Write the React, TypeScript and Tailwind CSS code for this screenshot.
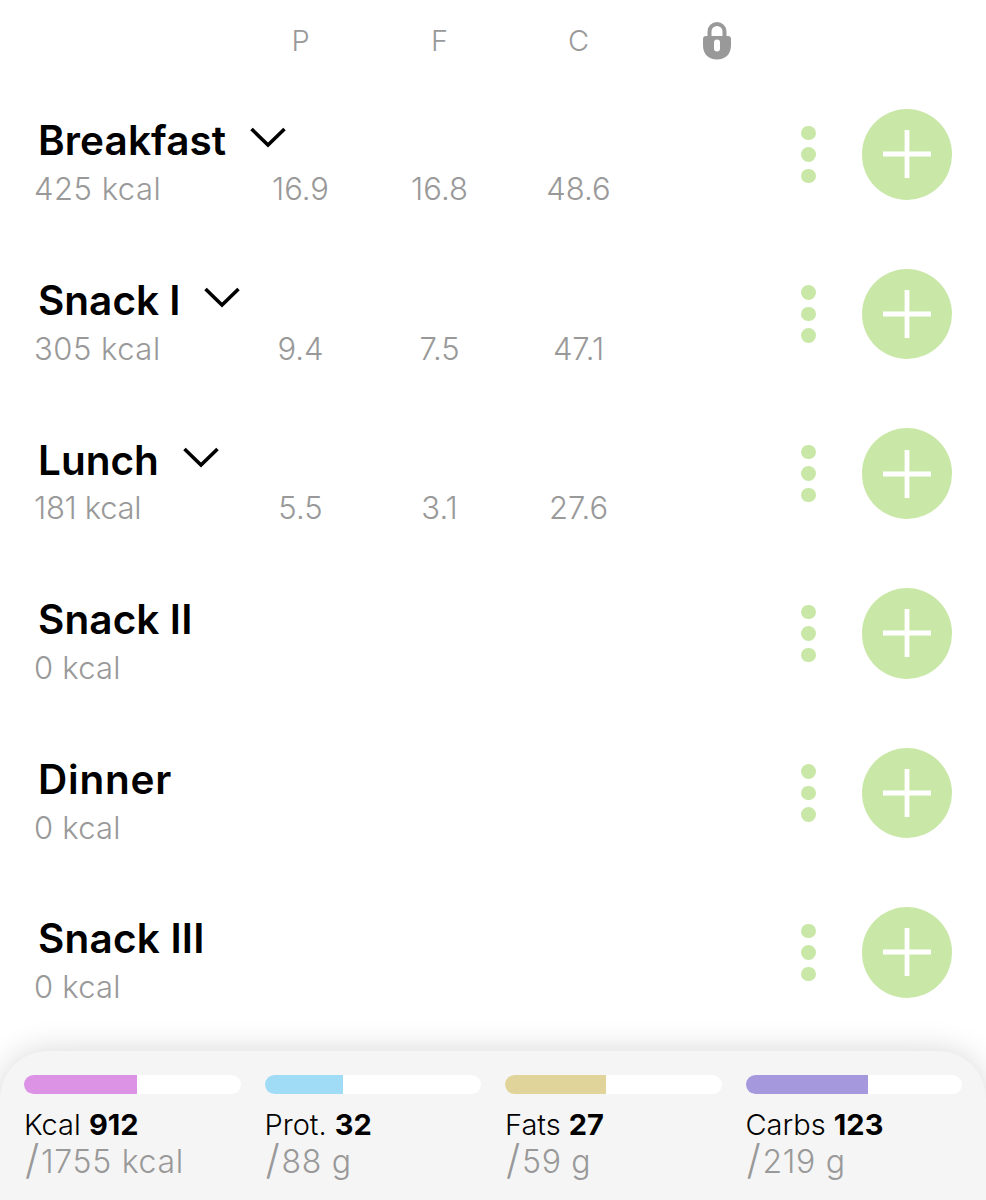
import clsx from "clsx";

type Meal = {
  name: string;
  kcal: number;
  macros?: string[];
  tracking: string;
  kcalTracking: string;
};

const meals: Meal[] = [
  { name: "Breakfast", kcal: 425, macros: ["16.9", "16.8", "48.6"], tracking: "tracking-[0.1px]", kcalTracking: "tracking-[0.5px]" },
  { name: "Snack I", kcal: 305, macros: ["9.4", "7.5", "47.1"], tracking: "tracking-[0px]", kcalTracking: "tracking-[0.5px]" },
  { name: "Lunch", kcal: 181, macros: ["5.5", "3.1", "27.6"], tracking: "tracking-[0px]", kcalTracking: "tracking-[-0.3px]" },
  { name: "Snack II", kcal: 0, tracking: "tracking-[0.1px]", kcalTracking: "tracking-[0.2px]" },
  { name: "Dinner", kcal: 0, tracking: "tracking-[0.8px]", kcalTracking: "tracking-[0.2px]" },
  { name: "Snack III", kcal: 0, tracking: "tracking-[0.2px]", kcalTracking: "tracking-[0.2px]" },
];

const totals = [
  { label: "Kcal", value: 912, goal: "1755 kcal", percent: 52, color: "bg-[#dc93e6]" },
  { label: "Prot.", value: 32, goal: "88 g", percent: 36.3, color: "bg-[#a0dcf6]" },
  { label: "Fats", value: 27, goal: "59 g", percent: 46.6, color: "bg-[#e1d49a]" },
  { label: "Carbs", value: 123, goal: "219 g", percent: 56.4, color: "bg-[#a698dc]" },
];

const LockIcon = () => (
  <svg width="30" height="40" viewBox="0 0 30 40" fill="none">
    <path d="M7.500 17V10.500a7.500 7.500 0 0 1 15 0V17" stroke="#999" strokeWidth="4" />
    <path
      fill="#999"
      fillRule="evenodd"
      d="M4 15H26Q29 15 29 18V24.500C29 33 23.500 38.500 15 38.500S1 33 1 24.500V18Q1 15 4 15ZM15 18.500A3 3 0 0 0 12 21.500V27.500A3 3 0 0 0 18 27.500V21.500A3 3 0 0 0 15 18.500Z"
    />
  </svg>
);

const Chevron = () => (
  <svg width="36" height="22" viewBox="0 0 36 22" fill="none">
    <path d="M1.500 2L18 18L34.500 2" stroke="#000" strokeWidth="3.600" />
  </svg>
);

const MealRow = ({ meal }: { meal: Meal }) => (
  <div className="flex h-[159.600px] items-center pr-[34px]">
    <div className="w-[786px] pt-[22px]">
      <div className="flex h-12 items-center pl-[38px]">
        <h2 className={clsx("text-[40.500px] leading-12 font-semibold", meal.tracking)}>
          {meal.name}
        </h2>
        {meal.macros && (
          <span className="-mt-1.5 ml-6">
            <Chevron />
          </span>
        )}
      </div>
      <div className="flex h-12 items-center text-[31px] font-light text-[#999]">
        <span className={clsx("w-[231px] pl-[34px]", meal.kcalTracking)}>{meal.kcal} kcal</span>
        {meal.macros?.map((value, i) => (
          <span key={i} className="w-[139px] text-center">
            {value}
          </span>
        ))}
      </div>
    </div>
    <button className="ml-[15px] flex flex-col gap-[7px]">
      <span className="size-[14.500px] rounded-full bg-[#c9e8a8]" />
      <span className="size-[14.500px] rounded-full bg-[#c9e8a8]" />
      <span className="size-[14.500px] rounded-full bg-[#c9e8a8]" />
    </button>
    <button className="ml-auto flex size-[90.500px] items-center justify-center rounded-full bg-[#c9e8a8]">
      <svg width="48" height="48" viewBox="0 0 48 48">
        <path d="M24 0V48M0 24H48" stroke="#fff" strokeWidth="4.800" />
      </svg>
    </button>
  </div>
);

const App = () => {
  return (
    <div className="flex h-[1200px] w-[986px] flex-col overflow-hidden bg-white font-['Inter',sans-serif] text-black">
      <header className="flex h-[74.700px] shrink-0 items-start pt-[21px] pl-[231px] text-[29px] leading-10 font-light text-[#999]">
        <span className="w-[139px] text-center">P</span>
        <span className="w-[139px] text-center">F</span>
        <span className="w-[139px] text-center">C</span>
        <span className="flex w-[137px] justify-center">
          <LockIcon />
        </span>
      </header>

      <main className="h-[976.500px] shrink-0">
        {meals.map((meal) => (
          <MealRow key={meal.name} meal={meal} />
        ))}
      </main>

      <footer className="grid flex-1 grid-cols-4 gap-6 rounded-t-[48px] bg-[#f5f5f5] px-6 pt-6 shadow-[0_0_32px_rgba(0,0,0,0.16)]">
        {totals.map((item) => (
          <div key={item.label} className="whitespace-nowrap">
            <div className="h-[19px] overflow-hidden rounded-full bg-white">
              <div className={clsx("h-full", item.color)} style={{ width: `${item.percent}%` }} />
            </div>
            <p className="mt-[13px] text-[29px] leading-9 font-light">
              {item.label} <b className="font-bold">{item.value}</b>
            </p>
            <p className="flex h-[38px] items-center text-[32px] leading-[38px] font-light tracking-[0.7px] text-[#999]">
              <span className="-mt-1.5 mr-px ml-px text-[41px]">/</span>
              {item.goal}
            </p>
          </div>
        ))}
      </footer>
    </div>
  );
};

export default App;
